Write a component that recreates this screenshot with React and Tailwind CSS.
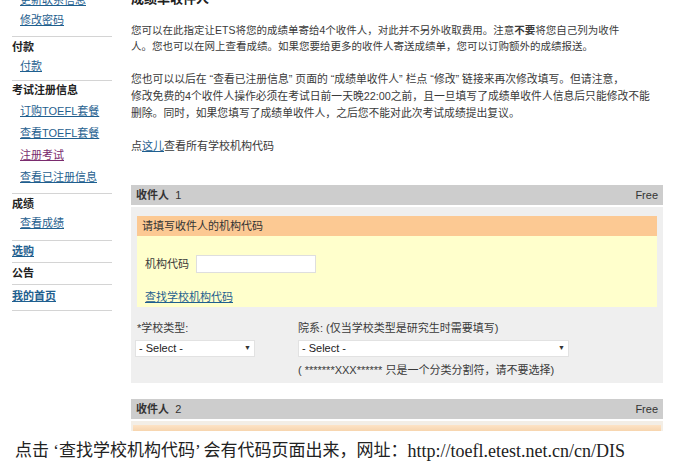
import React from "react";

const cjk = { fontFamily: '"Liberation Sans", Arial, "Noto Sans CJK SC", sans-serif' };
const serif = { fontFamily: '"Liberation Serif", "Noto Sans CJK SC", serif' };

function SideLink({ children, h = "h-[22px]", visited = false }) {
  return (
    <div className={`${h} flex items-center pl-[8px]`}>
      <a
        className={`text-[11px] underline ${visited ? "text-[#7a2b6e]" : "text-[#1f5f8f]"}`}
      >
        {children}
      </a>
    </div>
  );
}

function SideHead({ children, h = "h-[18px]" }) {
  return (
    <div className={`${h} flex items-center text-[11px] font-bold text-[#222]`}>{children}</div>
  );
}

function Divider() {
  return <div className="h-px bg-[#d4d4d4]" />;
}

function Sidebar() {
  return (
    <div className="w-[100px] ml-[12px] shrink-0 flex flex-col" style={cjk}>
      <div className="h-[2px]" />
      <SideLink h="h-[20px]">更新联系信息</SideLink>
      <SideLink h="h-[21px]">修改密码</SideLink>
      <div className="h-[5px]" />
      <Divider />
      <SideHead h="h-[20px]">付款</SideHead>
      <SideLink h="h-[18px]">付款</SideLink>
      <div className="h-[5px]" />
      <Divider />
      <SideHead h="h-[19px]">考试注册信息</SideHead>
      <SideLink h="h-[22px]">订购TOEFL套餐</SideLink>
      <SideLink h="h-[22px]">查看TOEFL套餐</SideLink>
      <SideLink h="h-[22px]" visited>注册考试</SideLink>
      <SideLink h="h-[22px]">查看已注册信息</SideLink>
      <div className="h-[5px]" />
      <Divider />
      <SideHead h="h-[20px]">成绩</SideHead>
      <SideLink h="h-[18px]">查看成绩</SideLink>
      <div className="h-[8px]" />
      <Divider />
      <div className="h-[21px] flex items-center">
        <a className="text-[11px] font-bold underline text-[#1f5f8f]">选购</a>
      </div>
      <Divider />
      <div className="h-[21px] flex items-center text-[11px] font-bold text-[#222]">公告</div>
      <Divider />
      <div className="h-[23px] flex items-center">
        <a className="text-[11px] font-bold underline text-[#1f5f8f]">我的首页</a>
      </div>
      <div className="h-[2px]" />
      <Divider />
    </div>
  );
}

function SelectBox({ w }) {
  return (
    <div
      className={`${w} h-[17px] bg-white border border-[#e2e2e2] flex items-center justify-between px-[3px] text-[11px] text-[#222]`}
    >
      <span>- Select -</span>
      <span className="text-[7px] text-[#333]">▼</span>
    </div>
  );
}

function RecipientHeader({ n }) {
  return (
    <div className="h-[20px] bg-[#cdcdcd] flex items-center justify-between px-[5px] text-[11px] text-[#333]">
      <span>
        <b>收件人</b>&nbsp;&nbsp;{n}
      </span>
      <span>Free</span>
    </div>
  );
}

function Main() {
  return (
    <div className="ml-[19px] w-[532px] flex flex-col text-[11px] text-[#3a3a3a]" style={cjk}>
      <div className="h-[22px] flex items-center text-[13px] font-bold text-[#222]">成绩单收件人</div>
      <div className="h-[12px]" />
      <p className="leading-[16px] text-[10.5px] whitespace-nowrap">
        您可以在此指定让ETS将您的成绩单寄给4个收件人，对此并不另外收取费用。注意<b>不要</b>将您自己列为收件
        <br />
        人。您也可以在网上查看成绩。如果您要给更多的收件人寄送成绩单，您可以订购额外的成绩报送。
      </p>
      <div className="h-[17px]" />
      <p className="leading-[17px] text-[10.8px] whitespace-nowrap">
        您也可以以后在 “查看已注册信息” 页面的 “成绩单收件人” 栏点 “修改” 链接来再次修改填写。但请注意，
        <br />
        修改免费的4个收件人操作必须在考试日前一天晚22:00之前，且一旦填写了成绩单收件人信息后只能修改不能
        <br />
        删除。同时，如果您填写了成绩单收件人，之后您不能对此次考试成绩提出复议。
      </p>
      <div className="h-[16px]" />
      <p className="leading-[16px]">
        点<a className="underline text-[#1f5f8f]">这儿</a>查看所有学校机构代码
      </p>
      <div className="h-[31px]" />
      <RecipientHeader n="1" />
      <div className="h-[2px]" />
      <div className="bg-[#efefef] px-[6px] pt-[9px] pb-[5px]">
        <div className="h-[20px] bg-[#fcc993] flex items-center px-[5px] text-[#333]">请填写收件人的机构代码</div>
        <div className="bg-[#ffffcc] px-[8px] pt-[19px] pb-[2px]">
          <div className="flex items-center h-[18px]">
            <span className="w-[51px]">机构代码</span>
            <div className="w-[120px] h-[18px] bg-white border border-[#dedede]" />
          </div>
          <div className="h-[16px]" />
          <div className="h-[16px] flex items-center">
            <a className="underline text-[#1f5f8f]">查找学校机构代码</a>
          </div>
        </div>
        <div className="flex mt-[14px] -ml-[2px]">
          <div className="w-[163px] flex flex-col">
            <div className="h-[15px] flex items-center pl-[2px]">*学校类型:</div>
            <div className="h-[4px]" />
            <SelectBox w="w-[120px]" />
          </div>
          <div className="flex flex-col">
            <div className="h-[15px] flex items-center">院系: (仅当学校类型是研究生时需要填写)</div>
            <div className="h-[4px]" />
            <SelectBox w="w-[271px]" />
            <div className="h-[16px] flex items-center mt-[5px]">( *******XXX****** 只是一个分类分割符，请不要选择)</div>
          </div>
        </div>
      </div>
      <div className="h-[16px]" />
      <RecipientHeader n="2" />
      <div className="h-[2px]" />
      <div className="bg-[#f3eee6] px-[2px] pt-[4px] h-[10px]">
        <div className="h-[6px] bg-gradient-to-b from-[#fde3c6] to-[#f7d5ae]" />
      </div>
    </div>
  );
}

export default function App() {
  return (
    <div className="w-[700px] h-[470px] bg-white overflow-hidden">
      <div className="h-[432px] overflow-hidden">
        <div className="flex -mt-[12px]">
          <Sidebar />
          <Main />
        </div>
      </div>
      <div className="h-[38px] flex items-center pl-[15px] text-[17px] text-[#222]" style={serif}>
        点击 ‘查找学校机构代码’ 会有代码页面出来，网址：<span className="text-[18px]">http://toefl.etest.net.cn/cn/DIS</span>
      </div>
    </div>
  );
}
